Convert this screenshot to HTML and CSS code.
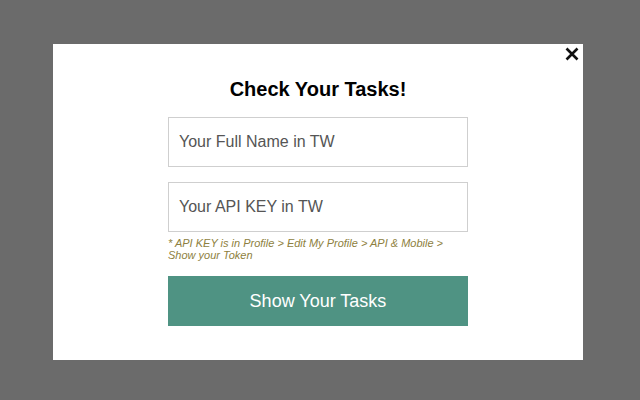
FILE: index.html
```html
<!DOCTYPE html>
<html>
<head>
<meta charset="utf-8">
<link rel="stylesheet" href="styles.css">
</head>
<body>
<div class="modal">
  <button class="close" aria-label="close">
    <svg width="14" height="14" viewBox="0 0 14 14"><path d="M1.5 1.5 L12.5 12.5 M12.5 1.5 L1.5 12.5" stroke="#111" stroke-width="2.6" stroke-linecap="butt"/></svg>
  </button>
  <div class="content">
    <h1 class="title">Check Your Tasks!</h1>
    <input class="field" type="text" placeholder="Your Full Name in TW">
    <input class="field field-second" type="text" placeholder="Your API KEY in TW">
    <p class="hint">* API KEY is in Profile &gt; Edit My Profile &gt; API &amp; Mobile &gt; Show your Token</p>
    <button class="submit">Show Your Tasks</button>
  </div>
</div>
</body>
</html>
```
FILE: styles.css
```css
html, body {
  margin: 0;
  padding: 0;
  height: 100%;
}
body {
  background: #6b6b6b;
  font-family: "Liberation Sans", Arial, sans-serif;
  overflow: hidden;
}
.modal {
  position: relative;
  box-sizing: border-box;
  width: 530px;
  height: 316px;
  margin: 44px 0 0 53px;
  background: #ffffff;
  padding-top: 34px;
}
.close {
  position: absolute;
  top: 3px;
  right: 4px;
  width: 14px;
  height: 14px;
  padding: 0;
  border: 0;
  background: none;
  display: flex;
}
.content {
  width: 300px;
  margin: 0 auto;
  display: flex;
  flex-direction: column;
}
.title {
  margin: 0 0 16px;
  font-size: 20px;
  line-height: 23px;
  font-weight: bold;
  color: #000;
  text-align: center;
}
.field {
  box-sizing: border-box;
  width: 300px;
  height: 50px;
  margin: 0;
  padding: 0 10px;
  border: 1px solid #cfcfcf;
  font-family: "Liberation Sans", Arial, sans-serif;
  font-size: 16px;
  color: #333;
  background: #fff;
  outline: none;
}
.field::placeholder {
  color: #555;
}
.field-second {
  margin-top: 15px;
}
.hint {
  margin: 5px 0 0;
  font-size: 11px;
  line-height: 12px;
  font-style: italic;
  color: #8e7f40;
}
.submit {
  margin-top: 15px;
  height: 50px;
  width: 300px;
  border: 0;
  background: #4f9383;
  color: #fff;
  font-family: "Liberation Sans", Arial, sans-serif;
  font-size: 18px;
  padding: 0;
}
```
